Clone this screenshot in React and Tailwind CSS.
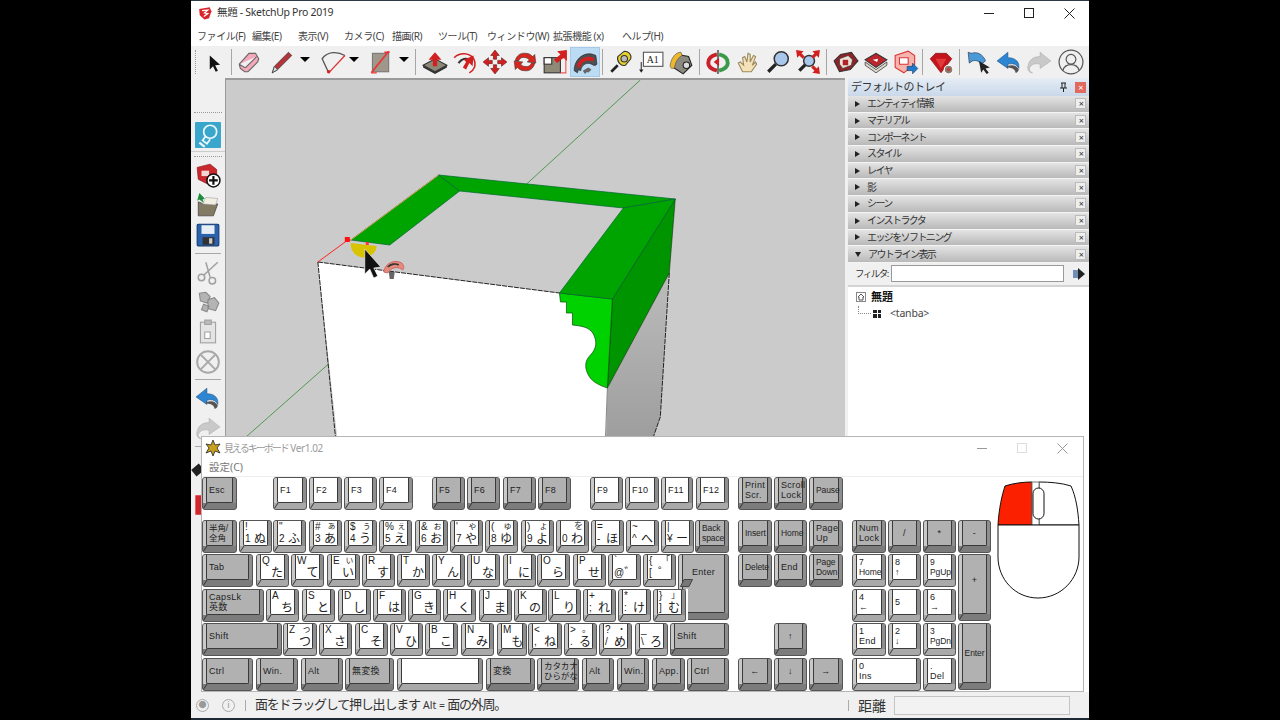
const cjk = "font-['Noto_Sans','Noto_Sans_CJK_JP',sans-serif]";

// --- icons (24 box) ---
const I = ({ children, size = 24, box = "0 0 24 24" }) => (
  <svg width={size} height={size} viewBox={box} className="block">
    {children}
  </svg>
);

const icons = {
  select: <path d="M9 6v13l3-3 2.500 5 2-1-2.500-5 4.500-.4z" fill="#111" />,
  eraser: <path d="M3 14 12 4h6l3 5-1 3-9 9H8l-4-3z M3 14l5 3h1l10-10" fill="#f4a8ba" stroke="#666" strokeWidth="1" />,
  pencil: (
    <g>
      <path d="M3 22l2-6L18 3l3 3L8 19z" fill="#b8323a" stroke="#444" strokeWidth="0.8" />
      <path d="M3 22l2-6 3 3z" fill="#ddd" stroke="#444" strokeWidth="0.8" />
    </g>
  ),
  arc: (
    <g fill="none">
      <path d="M8 22 2 9C7 2 16 2 23 6" stroke="#555" strokeWidth="1.2" />
      <path d="M8 22 23 6" stroke="#d33" strokeWidth="1.2" />
      <circle cx="8" cy="21" r="1.6" fill="#d22" />
    </g>
  ),
  rect: (
    <g>
      <rect x="5" y="4" width="15" height="17" fill="#9f988a" stroke="#777" />
      <path d="M4 22 20 2" stroke="#e33" strokeWidth="1.6" />
      <path d="M4 22h5M16 3h5" stroke="#e33" strokeWidth="1.2" />
    </g>
  ),
  pushpull: (
    <g>
      <path d="M1 15 12 9l11 6-11 6z" fill="#8c8878" stroke="#333" />
      <path d="M1 15v2l11 6 11-6v-2l-11 6z" fill="#333" />
      <path d="M12 3l6 7h-4v6h-4v-6H6z" fill="#d21f1f" />
    </g>
  ),
  follow: (
    <g fill="none">
      <path d="M2 8c5-5 14-5 18 1 3 6 0 11-4 13" stroke="#d21f1f" strokeWidth="1.4" />
      <path d="M6 13c3-4 7-5 10-3" stroke="#333" strokeWidth="2" />
      <path d="M11 10l9-4-1 10-3-3-3 6-3-2 3-5z" fill="#d21f1f" />
    </g>
  ),
  move: (
    <g fill="#d21f1f" stroke="#511" strokeWidth="0.5">
      <path d="M12 1l4 5h-2.500v3.500h-3V6H8z" />
      <path d="M12 23l4-5h-2.500v-3.500h-3V18H8z" />
      <path d="M1 12l5-4v2.500h3.500v3H6V16z" />
      <path d="M23 12l-5-4v2.500h-3.500v3H18V16z" />
    </g>
  ),
  rotate: (
    <g fill="#d7261e" stroke="#333" strokeWidth="0.5">
      <path d="M3 11c1-5 5-8 10-7 3 0 5 2 6 3l2-2 1 8-8-1 2-2c-2-2-3-2-4-2-3-1-5 1-6 3z" />
      <path d="M21 13c-1 5-5 8-10 7-3 0-5-2-6-3l-2 2-1-8 8 1-2 2c2 2 3 2 4 2 3 1 5-1 6-3z" />
    </g>
  ),
  scale: (
    <g>
      <rect x="2" y="8" width="15" height="14" fill="#8f8a78" stroke="#333" />
      <rect x="2" y="8" width="7" height="6" fill="#fff" stroke="#333" />
      <path d="M17 8h5v14h-5" fill="none" stroke="#e55" />
      <path d="M23 1l-9 1 3 3-6 5 3 3 6-5 3 3z" fill="#d21f1f" />
    </g>
  ),
  offset: (
    <g>
      <path d="M2 20C2 9 12 1 22 6l1 8c-2 2-3 1-5 0-4-2-9 0-10 6l-2-1-1 3z" fill="#4d5055" stroke="#222" strokeWidth="0.6" />
      <path d="M6 17c1-6 7-10 14-7" fill="none" stroke="#d21f1f" strokeWidth="3.4" />
      <path d="M10 20l5-3 3 2-3 3-1-1-2 2z" fill="#666" />
    </g>
  ),
  tape: (
    <g>
      <path d="M9 7l6-5c4 0 7 3 6 7l-5 6c-4 1-8-3-7-8z" fill="#e6d22c" stroke="#333" strokeWidth="1" />
      <circle cx="15" cy="9" r="3" fill="#bbb" stroke="#333" />
      <path d="M9 15 3 21" stroke="#222" strokeWidth="2.5" />
    </g>
  ),
  text: (
    <g>
      <rect x="5" y="3" width="18" height="13" fill="#fff" stroke="#555" />
      <text x="8" y="13" fontSize="9" fontFamily="Liberation Serif" fill="#222">
        A1
      </text>
      <path d="M3 12v8" stroke="#333" strokeWidth="1" />
      <path d="M1 19h4l-2 3z" fill="#222" />
    </g>
  ),
  paint: (
    <g>
      <path d="M9 5l10 2 3 8-8 8-9-6z" fill="#8a8a80" stroke="#222" />
      <circle cx="17" cy="15" r="3" fill="#ddd" stroke="#222" />
      <path d="M12 3c-5 0-9 5-10 12 0 3 2 4 4 2 1-5 3-9 7-11z" fill="#efb82c" stroke="#555" strokeWidth="0.6" />
    </g>
  ),
  orbit: (
    <g fill="none">
      <path d="M11 5C6 6 3 9 3 13s4 6 8 7" stroke="#c9202a" strokeWidth="3.6" />
      <path d="M13 5c5 1 8 4 8 8s-4 6-8 7" stroke="#3a9a4a" strokeWidth="3.6" />
      <path d="M12 1v22" stroke="#333" strokeWidth="1.2" />
      <path d="M8 12l5-4v8z" fill="#c9202a" />
    </g>
  ),
  pan: <path d="M7 21 3 13l2-1 3 3-1-7 2-1 2 5 1-8 2 1 0 7 3-6 2 1-3 8 3-3 1 2-5 7z" fill="#f6e2b8" stroke="#9a8a60" strokeWidth="1" />,
  zoom: (
    <g>
      <path d="M10 14 3 21" stroke="#222" strokeWidth="3" />
      <circle cx="15" cy="9" r="6.5" fill="#a9c7ea" stroke="#333" strokeWidth="1.4" />
    </g>
  ),
  zoomext: (
    <g>
      <path d="M10 14 4 20" stroke="#222" strokeWidth="3" />
      <circle cx="13" cy="11" r="5" fill="#a9c7ea" stroke="#333" strokeWidth="1.4" />
      <path d="M1 1l7 1-2 2 3 3-2 2-3-3-2 2zM23 1l-1 7-2-2-3 3-2-2 3-3-2-2zM23 23l-7-1 2-2-3-3 2-2 3 3 2-2z" fill="#d21f1f" />
    </g>
  ),
  warehouse: (
    <g>
      <path d="M1 11l6-6 10-2 6 8-7 8-10 2z" fill="#8f2226" stroke="#333" />
      <path d="M6 9l8-3 4 4-1 5-8 3-3-4z" fill="#e9e2d4" stroke="#333" strokeWidth="0.6" />
      <path d="M9 10h5v5H9z" fill="#b02228" />
    </g>
  ),
  ext: (
    <g>
      <path d="M2 10l10-6 10 6-10 7z" fill="#b9262c" stroke="#333" />
      <path d="M2 12l10 7 10-7v3l-10 7-10-7z" fill="#ddd8ce" stroke="#333" strokeWidth="0.7" />
      <path d="M9 10l5-1-1 3z" fill="#fff" />
    </g>
  ),
  layout: (
    <g>
      <path d="M2 6l12-4 6 4v8l-10 8-8-5z" fill="#f5b5ae" stroke="#d33" />
      <path d="M6 8h8v6H6z" fill="#fff" stroke="#d33" />
      <path d="M13 16h5v-3l5 5-5 5v-3h-5z" fill="#1f78c8" stroke="#124" strokeWidth="0.4" />
    </g>
  ),
  ruby: (
    <g>
      <path d="M2 9l5-5h10l5 5-10 13z" fill="#c4141c" stroke="#711" strokeWidth="0.6" />
      <path d="M7 9h10l-5 9z" fill="#e23a3a" />
      <circle cx="19" cy="19" r="4" fill="#8a7a70" stroke="#fff" />
      <circle cx="19" cy="19" r="1.4" fill="#c33" />
    </g>
  ),
  share: (
    <g>
      <path d="M2 3l1 10 3-2c3-1 6 0 8 3l4-3C16 5 10 2 5 4z" fill="#4a9ad8" stroke="#235" strokeWidth="0.6" />
      <path d="M12 11l10 6-4 1 3 4-2 1-3-4-2 3z" fill="#222" />
    </g>
  ),
  undo: (
    <g>
      <path d="M11 3 1 11l10 7v-4c5-1 8 0 10 4 1-6-3-10-10-10z" fill="#2d86d2" stroke="#164a80" strokeWidth="0.5" />
      <path d="M10 16c5-2 9-1 11 3 0 1-1 3-3 3 0-3-3-5-8-5z" fill="#555" />
    </g>
  ),
  redo: <path d="M13 3l10 8-10 7v-4c-5-1-8 0-10 4 0 2 1 3 3 4-4 0-5-4-4-7 1-5 5-8 11-8z" fill="#c9c9c9" stroke="#aaa" strokeWidth="0.5" />,
  user: (
    <g fill="none" stroke="#555" strokeWidth="1.1">
      <circle cx="12" cy="12" r="11" />
      <circle cx="12" cy="9.5" r="4.5" />
      <path d="M4.500 20c1-4 4-5.500 7.500-5.500s6.500 1.500 7.500 5.500" />
    </g>
  ),
  lamp: (
    <g>
      <rect width="24" height="24" rx="1" fill="#3aa6cc" />
      <circle cx="14" cy="9" r="6" fill="none" stroke="#eef8fb" strokeWidth="1.6" />
      <path d="M10 13 7 17l4 3 3-4" fill="none" stroke="#eef8fb" strokeWidth="1.6" />
      <path d="M4 19l5 4" stroke="#eef8fb" strokeWidth="2" />
    </g>
  ),
  add: (
    <g>
      <path d="M2 5l12-3 6 5v6l-7 8-10-5z" fill="#c8282e" stroke="#811" strokeWidth="0.6" />
      <path d="M6 8h7v5H6z" fill="#f5d6d2" />
      <circle cx="17" cy="17" r="6" fill="#fff" stroke="#111" strokeWidth="1.4" />
      <path d="M17 13v8M13 17h8" stroke="#111" strokeWidth="2" />
    </g>
  ),
  open: (
    <g>
      <path d="M3 9v13h14l4-11H8z" fill="#827a62" stroke="#333" strokeWidth="0.6" />
      <path d="M7 11l3-6 11 1-2 6z" fill="#f2eee2" stroke="#999" strokeWidth="0.5" />
      <path d="M4 1l5 5-2 1 1 3-4-3-2 1z" fill="#1e8c3c" />
    </g>
  ),
  save: (
    <g>
      <rect x="2" y="2" width="20" height="20" rx="1" fill="#2b62ae" stroke="#123a70" />
      <rect x="6" y="3" width="12" height="8" fill="#e8eef6" />
      <rect x="7" y="14" width="11" height="7" fill="#333" />
      <rect x="13" y="15" width="3" height="5" fill="#ccc" />
    </g>
  ),
  cut: (
    <g fill="none" stroke="#a0a0a0" strokeWidth="1.4">
      <circle cx="6" cy="17" r="3" />
      <circle cx="16" cy="20" r="3" />
      <path d="M8 15 21 3M14 17 10 3" />
    </g>
  ),
  copy: <path d="M4 4l6-1 4 4-3 6-6-2zM12 10l6-2 4 5-3 7-7-2zM8 14l5 2-2 5-5-2z" fill="#b4b4b4" stroke="#8a8a8a" />,
  paste: (
    <g fill="#e4e4e4" stroke="#a0a0a0">
      <rect x="5" y="3" width="14" height="19" />
      <rect x="9" y="1" width="6" height="4" fill="#bbb" />
      <path d="M9 12h5v6H9z" fill="#fff" />
    </g>
  ),
  clear: (
    <g fill="none" stroke="#a8a8a8" strokeWidth="1.8">
      <circle cx="12" cy="12" r="10" />
      <path d="M5 5l14 14M19 5 5 19" />
    </g>
  ),
  // mostly hidden behind the keyboard window
  darkTool: <path d="M2 12l7-6 5 6-7 6z" fill="#222" />,
  redTool: <path d="M4 3h8v18H4z" fill="#d2262c" />,
};

const Tool = ({ name, active }) => (
  <div className={`flex h-[30px] w-[30px] shrink-0 items-center justify-center ${active ? "bg-[#bcdcf4] shadow-[inset_0_0_0_1px_#a6cbe8]" : ""}`}>
    <I size={26}>{icons[name]}</I>
  </div>
);
const Drop = ({ cls }) => <div className={`h-0 w-0 shrink-0 self-start mt-[11px] border-x-[5px] border-t-[5px] border-x-transparent border-t-black ${cls}`} />;
const VSep = ({ cls }) => <div className={`h-[26px] w-px shrink-0 bg-[#a6a6a6] ${cls}`} />;
const HSep = ({ cls }) => <div className={`mx-[3px] h-px w-[26px] bg-[#a8a8a8] ${cls}`} />;

const menus = [
  ["ファイル(F)", "w-[55px]"],
  ["編集(E)", "w-[46px]"],
  ["表示(V)", "w-[46px]"],
  ["カメラ(C)", "w-[48px]"],
  ["描画(R)", "w-[46px]"],
  ["ツール(T)", "w-[49px]"],
  ["ウィンドウ(W)", "w-[66px]"],
  ["拡張機能 (x)", "w-[69px]"],
  ["ヘルプ(H)", "w-[60px]"],
];

const trayRows = ["エンティティ情報", "マテリアル", "コンポーネント", "スタイル", "レイヤ", "影", "シーン", "インストラクタ", "エッジをソフトニング"];

// --- keyboard data: a/b are page x from/to ---
const g = (a, b, t, o = {}) => ({ a, b, t, ...o });
const n = (a, b, t, o = {}) => ({ a, b, t, white: true, ...o });
const w = (a, tl, bl, tr, br, b) => ({ a, b: b || a + 33, tl, bl, tr, br, white: true });

const rows = [
  [
    g(202, 237, "Esc"),
    n(273, 307, "F1"), n(309, 342, "F2"), n(344, 377, "F3"), n(379, 413, "F4"),
    g(432, 465, "F5"), g(467, 500, "F6"), g(503, 536, "F7"), g(538, 571, "F8"),
    n(590, 623, "F9"), n(625, 659, "F10"), n(661, 693, "F11"), n(696, 729, "F12"),
    g(738, 772, "Print\nScr."), g(774, 807, "Scroll\nLock"), g(809, 843, "Pause", { small: true }),
  ],
  [
    g(202, 237, "半角/\n全角", { small: true }),
    w(239, "!", "1", "", "ぬ"), w(273, "\"", "2", "", "ふ"), w(309, "#", "3", "ぁ", "あ"), w(344, "$", "4", "ぅ", "う"),
    w(379, "%", "5", "ぇ", "え"), w(415, "&", "6", "ぉ", "お"), w(450, "'", "7", "ゃ", "や"), w(485, "(", "8", "ゅ", "ゆ"),
    w(521, ")", "9", "ょ", "よ"), w(556, "", "0", "を", "わ"), w(591, "=", "-", "", "ほ"), w(626, "~", "^", "", "へ"), w(661, "|", "¥", "", "ー"),
    g(695, 729, "Back\nspace", { small: true }),
    g(738, 772, "Insert", { small: true }), g(774, 807, "Home", { small: true }), g(809, 843, "Page\nUp"),
    g(852, 886, "Num\nLock"), g(888, 921, "/", { center: true }), g(923, 956, "*", { center: true }), g(958, 991, "-", { center: true }),
  ],
  [
    g(202, 253, "Tab"),
    w(256, "Q", "", "", "た"), w(291, "W", "", "", "て"), w(327, "E", "", "ぃ", "い"), w(362, "R", "", "", "す"), w(397, "T", "", "", "か"),
    w(432, "Y", "", "", "ん"), w(467, "U", "", "", "な"), w(503, "I", "", "", "に"), w(537, "O", "", "", "ら"), w(573, "P", "", "", "せ"),
    w(608, "`", "@", "", "゛"), w(643, "{", "[", "「", "゜"),
    g(678, 729, "Enter", { h: 66, center: true, notch: true, pt: "pt-[12px]" }),
    g(738, 772, "Delete", { small: true }), g(774, 807, "End"), g(809, 843, "Page\nDown", { small: true }),
    n(852, 886, "7\nHome", { small: true }), n(888, 921, "8\n↑"), n(923, 956, "9\nPgUp", { small: true }),
    g(958, 991, "+", { h: 67, center: true, pt: "pt-[20px]" }),
  ],
  [
    g(202, 264, "CapsLk\n英数"),
    w(266, "A", "", "", "ち"), w(302, "S", "", "", "と"), w(338, "D", "", "", "し"), w(373, "F", "", "", "は"), w(408, "G", "", "", "き"),
    w(443, "H", "", "", "く"), w(479, "J", "", "", "ま"), w(514, "K", "", "", "の"), w(548, "L", "", "", "り"),
    w(583, "+", ";", "", "れ"), w(618, "*", ":", "", "け"), w(653, "}", "]", "」", "む"),
    { a: 686, b: 688, gap: true },
    n(852, 886, "4\n←"), n(888, 921, "5"), n(923, 956, "6\n→"),
  ],
  [
    g(202, 282, "Shift"),
    w(283, "Z", "", "っ", "つ", 317), w(319, "X", "", "", "さ"), w(355, "C", "", "", "そ"), w(390, "V", "", "", "ひ"), w(425, "B", "", "", "こ"),
    w(461, "N", "", "", "み"), w(497, "M", "", "", "も", 527), w(528, "<", ",", "", "ね", 562), w(564, ">", ".", "。", "る"), w(599, "?", "/", "・", "め"), w(635, "_", "\\", "", "ろ"),
    g(670, 729, "Shift"),
    g(774, 807, "↑", { center: true }),
    n(852, 886, "1\nEnd"), n(888, 921, "2\n↓"), n(923, 956, "3\nPgDn", { small: true }),
    g(958, 991, "Enter", { h: 67, center: true, small: true }),
  ],
  [
    g(202, 253, "Ctrl"), g(256, 298, "Win."), g(301, 343, "Alt"), g(345, 394, "無変換"), n(397, 483, ""), g(486, 535, "変換"),
    g(537, 579, "カタカナ\nひらがな", { small: true }), g(582, 614, "Alt"), g(617, 649, "Win."), g(652, 685, "App."), g(687, 729, "Ctrl"),
    g(738, 772, "←", { center: true }), g(774, 807, "↓", { center: true }), g(809, 843, "→", { center: true }),
    n(852, 921, "0\nIns"), n(923, 956, ".\nDel"),
  ],
];

const Key = ({ k, ml }) => {
  if (k.gap) return <div className="relative h-[33px] shrink-0 bg-white" style={{ marginLeft: ml, width: k.b - k.a }} />;
  const h = k.h || 33;
  return (
    <div
      className={`relative shrink-0 overflow-hidden rounded-[3px] border border-[#555] pb-[6px] font-['Liberation_Sans','Noto_Sans_CJK_JP',sans-serif] ${k.white ? "bg-[#a9a9a9]" : "bg-[#7c7c7c]"}`}
      style={{ marginLeft: ml, width: k.b - k.a, height: h }}
    >
      <div className="h-full border-l-[3px] border-r-[3px] border-l-[#c9c9c9] border-r-[#8e8e8e]">
        <div
          className={`h-full rounded-b-[2px] border-x border-b border-[#3a3a3a] text-[#222] ${k.white ? "bg-white" : "bg-[#b1b1b1]"} ${
            k.tl !== undefined ? "grid grid-cols-[1fr_auto] grid-rows-2 px-px" : `flex whitespace-pre px-[2px] ${k.pt ? `items-start ${k.pt}` : "items-center"}`
          } ${k.center ? "justify-center" : ""}`}
        >
          {k.tl !== undefined ? (
            <>
              <span className="text-[10px] leading-[12px]">{k.tl}</span>
              <span className="text-right text-[9px] leading-[11px] text-[#333]">{k.tr}</span>
              <span className="text-[10px] leading-[12px]">{k.bl}</span>
              <span className="text-right text-[12px] leading-[12px]">{k.br}</span>
            </>
          ) : (
            <span className={k.small ? "text-[8.5px] leading-[10px] tracking-[-0.1px]" : "text-[9px] leading-[10px] tracking-[0.3px]"}>{k.t}</span>
          )}
        </div>
      </div>
      <svg width="6" height="6" className="absolute bottom-0 left-0">
        <path d="M0 6 4 0" stroke="#333" strokeWidth="1" />
      </svg>
      {k.notch && (
        <svg width="13" height="8" className="absolute left-[1px] top-[24px]">
          <path d="M.5 7.500 4 .5h8.500L9 7.500z" fill="#777" stroke="#444" />
        </svg>
      )}
    </div>
  );
};

const KeyRow = ({ keys, cls }) => (
  <div className={`flex h-[33px] ${cls}`}>
    {keys.map((k, i) => (
      <Key key={i} k={k} ml={k.a - (i ? keys[i - 1].b : 202)} />
    ))}
  </div>
);

const MouseDrawing = () => (
  <svg width="83" height="118" viewBox="997 481 83 118" className="ml-[6px] mt-[4px] shrink-0">
    <path d="M998 525C999 508 1002 495 1005 486 1014 483 1024 482 1032 482V525z" fill="#fb2000" stroke="#111" />
    <path d="M1039 482C1050 482 1062 483 1071 486 1076 497 1078 510 1079 525H1039z" fill="#fff" stroke="#111" />
    <path d="M1032 482h7v43h-7z" fill="#fff" stroke="#777" />
    <path d="M998 525h81v32c0 22-18 41-41 41s-40-19-40-41z" fill="#fff" stroke="#111" />
    <rect x="1033" y="488" width="11" height="31" rx="5.5" fill="#fff" stroke="#111" />
  </svg>
);

const Viewport = () => (
  <svg viewBox="225 80 620 612" className="block h-full w-full" preserveAspectRatio="none">
    <defs>
      <linearGradient id="side" x1="0" y1="0" x2="0" y2="1">
        <stop offset="0" stopColor="#bcbcbc" />
        <stop offset="1" stopColor="#989898" />
      </linearGradient>
    </defs>
    <path d="M640 80 525 185M245 437 330 362" stroke="#4f9a4f" strokeWidth="1" />
    {/* front + side faces */}
    <path d="M317 262 559 293 612 299 607 388 605 470H340z" fill="#fff" />
    <path d="M669 273 607 388 605 470H652L653 437 660 417z" fill="url(#side)" />
    <path d="M317 262 338 470" stroke="#222" strokeWidth="1" strokeDasharray="5 1" fill="none" />
    <path d="M317 262 559 293" stroke="#222" strokeWidth="1" strokeDasharray="5 1" fill="none" />
    <path d="M669 273 660 417 653 437" stroke="#222" strokeWidth="1" strokeDasharray="5 1" fill="none" />
    <path d="M607 388 605 440" stroke="#888" strokeWidth="1" />
    {/* moulding */}
    <path d="M675 199 612 299 607 388 669 273z" fill="#009400" stroke="#111" strokeWidth="0.5" />
    <path d="M559 293 612 299 607 388C598 385 590 381 587 373 584 366 585 360 590 355 596 349 597 342 593 334 589 327 581 326 572 325V313H566V302H560z" fill="#00d200" stroke="#0a4a0a" strokeWidth="0.7" />
    <path d="M350 240 438 175 459 191 389 245z" fill="#00a400" stroke="#063" strokeWidth="0.7" />
    <path d="M438 175 675 199 623 208 459 191z" fill="#00a400" stroke="#063" strokeWidth="0.7" />
    <path d="M675 199 623 208 559 293 612 299z" fill="#00a400" stroke="#063" strokeWidth="0.7" />
    <path d="M350 240 438 175" stroke="#d9a050" strokeWidth="1" />
    <path d="M317 262 347 240 350 240" stroke="#f22" strokeWidth="1" fill="none" />
    <rect x="344" y="237" width="5" height="5" fill="#f11" />
    <rect x="365" y="242" width="3" height="3" fill="#f33" />
    {/* cursor */}
    <path d="M350 243A13 13 0 0 0 376 246L366 245z" fill="#d8c300" />
    <path d="M364 249v25l5-5 4 9 4-2-4-8 7-1z" fill="#111" stroke="#fff" strokeWidth="0.6" />
    <path d="M383 272c1-9 11-13 18-9 2 2 3 5 1 7-4-4-12-3-15 3z" fill="#e58a7a" stroke="#c66" strokeWidth="1" />
    <path d="M387 267c3-3 8-4 11-2" fill="none" stroke="#333" strokeWidth="1.6" />
    <path d="M388 272l6 0-1 7-4 0z" fill="#666" />
  </svg>
);

export default function App() {
  return (
    <div className={`flex h-[720px] w-[1280px] justify-center overflow-hidden bg-black ${cjk}`}>
      <div className="relative flex h-[720px] w-[898px] flex-col border-b-2 border-t border-b-[#1d2a36] border-t-[#2e3a45] bg-[#f0f0f0]">
        {/* title bar */}
        <div className="flex h-[24px] shrink-0 items-center bg-white pl-[7px]">
          <I size={14}>
            <path d="M2 5 20 2l3 7-4 12-8 2-8-7z" fill="#d8232a" />
            <path d="M7 8l10-1-6 5 6 1-7 5" fill="none" stroke="#fff" strokeWidth="2" />
          </I>
          <span className="ml-[5px] text-[10.5px] tracking-[-0.3px] text-[#333]">無題 - SketchUp Pro 2019</span>
          <div className="ml-auto flex items-center text-[#222]">
            <div className="flex w-[40px] justify-center"><div className="h-px w-[10px] bg-[#222]" /></div>
            <div className="flex w-[40px] justify-center"><div className="h-[10px] w-[10px] border border-[#222]" /></div>
            <div className="flex w-[40px] justify-center">
              <svg width="11" height="11"><path d="M.5.5l10 10M10.500.5l-10 10" stroke="#222" /></svg>
            </div>
          </div>
        </div>
        {/* menu */}
        <div className="flex h-[21px] shrink-0 items-center bg-white pl-[6px] pt-[1px] text-[10px] tracking-[-0.4px] text-[#444]">
          {menus.map(([t, c]) => (
            <span key={t} className={`${c} shrink-0 whitespace-nowrap`}>{t}</span>
          ))}
        </div>
        {/* top toolbar */}
        <div className="flex h-[32px] shrink-0 items-center bg-[#f0f0f0]">
          <div className="ml-[4px] mr-[2px] h-[24px] w-px border-l border-dotted border-[#999]" />
          <Tool name="select" />
          <VSep cls="ml-[3px] mr-[2px]" />
          <Tool name="eraser" />
          <div className="w-[3px] shrink-0" />
          <Tool name="pencil" />
          <Drop cls="ml-[3px] mr-[2px]" />
          <div className="w-[6px] shrink-0" />
          <Tool name="arc" />
          <Drop cls="ml-[1px]" />
          <div className="w-[6px] shrink-0" />
          <Tool name="rect" />
          <Drop cls="ml-[4px]" />
          <VSep cls="ml-[6px] mr-[4px]" />
          <Tool name="pushpull" />
          <Tool name="follow" />
          <Tool name="move" />
          <Tool name="rotate" />
          <Tool name="scale" />
          <Tool name="offset" active />
          <VSep cls="ml-[2px] mr-[3px]" />
          <Tool name="tape" />
          <Tool name="text" />
          <Tool name="paint" />
          <VSep cls="ml-[3px] mr-[3px]" />
          <Tool name="orbit" />
          <Tool name="pan" />
          <Tool name="zoom" />
          <Tool name="zoomext" />
          <VSep cls="ml-[3px] mr-[4px]" />
          <Tool name="warehouse" />
          <Tool name="ext" />
          <Tool name="layout" />
          <VSep cls="ml-[1px] mr-[3px]" />
          <Tool name="ruby" />
          <VSep cls="ml-[3px] mr-[4px]" />
          <Tool name="share" />
          <Tool name="undo" />
          <Tool name="redo" />
          <div className="w-[2px] shrink-0" />
          <Tool name="user" />
        </div>
        {/* main area */}
        <div className="flex min-h-0 flex-1">
          <div className="flex w-[34px] shrink-0 flex-col items-center overflow-hidden bg-[#f0f0f0] pt-[34px]">
            <div className="h-px w-[28px] shrink-0 border-t border-dotted border-[#999]" />
            <div className="mt-[7px]"><Tool name="lamp" /></div>
            <div className="mt-[1px] h-px w-[34px] shrink-0 bg-[#ccc]" />
            <div className="mt-[4px] h-px w-[28px] shrink-0 border-t border-dotted border-[#999]" />
            <div className="mt-[3px]"><Tool name="add" /></div>
            <Tool name="open" />
            <Tool name="save" />
            <HSep cls="my-[3px] shrink-0" />
            <Tool name="cut" />
            <Tool name="copy" />
            <Tool name="paste" />
            <Tool name="clear" />
            <HSep cls="mb-[3px] mt-[2px] shrink-0" />
            <Tool name="undo" />
            <Tool name="redo" />
            <HSep cls="mt-[3px] shrink-0" />
            <div className="ml-[-12px] mt-[8px]"><Tool name="darkTool" /></div>
            <div className="ml-[-8px] mt-[5px]"><Tool name="redTool" /></div>
          </div>
          <div className="min-w-0 flex-1 border-l border-t-2 border-l-[#9a9a9a] border-t-[#9a9a9a] bg-[#cbcbcb]">
            <Viewport />
          </div>
          <div className="ml-[3px] flex w-[241px] shrink-0 flex-col bg-white">
            <div className="flex h-[18px] shrink-0 items-center bg-gradient-to-b from-[#e6edf5] to-[#c9d8ea] pl-[3px] pr-[3px] text-[11px] tracking-[-0.5px] text-[#333]">
              デフォルトのトレイ
              <svg width="9" height="11" className="ml-auto mr-[7px]">
                <path d="M2 1h5M3 1v5M6 1v5M1 6h7M4.500 6v4" stroke="#222" fill="none" />
              </svg>
              <div className="flex h-[11px] w-[11px] items-center justify-center bg-[#e06a5e] text-[9px] leading-none text-white">×</div>
            </div>
            {trayRows.map((t) => (
              <TrayRow key={t} label={t} />
            ))}
            <TrayRow label="アウトライン表示" open />
            <div className="flex h-[24px] shrink-0 items-center border-b-2 border-[#d4d4d4] bg-[#f0f0f0] pl-[7px]">
              <span className="w-[35px] shrink-0 whitespace-nowrap text-[9.5px] tracking-[-1.5px] text-[#333]">フィルタ:</span>
              <div className="ml-[1px] h-[17px] w-[173px] shrink-0 border border-[#9a9a9a] bg-white" />
              <svg width="14" height="12" viewBox="0 0 14 12" className="ml-[8px]">
                <rect x="1" y="2" width="6" height="8" fill="#6f8fb5" />
                <path d="M6 0l7 6-7 6z" fill="#222" />
              </svg>
            </div>
            <div className="pl-[8px] pt-[2px]">
              <div className="flex h-[17px] items-center">
                <svg width="10" height="10" viewBox="0 0 10 10">
                  <rect x=".5" y=".5" width="9" height="9" fill="none" stroke="#888" />
                  <path d="M5 2 2 5h1v3h4V5h1z" fill="none" stroke="#555" />
                </svg>
                <span className="ml-[5px] text-[11px] font-bold text-[#111]">無題</span>
              </div>
              <div className="flex h-[16px] items-center">
                <div className="ml-[2px] mb-[8px] h-[8px] w-[13px] border-b border-l border-dotted border-[#888]" />
                <div className="ml-[2px] grid h-[8px] w-[8px] grid-cols-2 gap-px">
                  <i className="bg-[#222]" /><i className="bg-[#222]" /><i className="bg-[#222]" /><i className="bg-[#222]" />
                </div>
                <span className="ml-[9px] text-[10.5px] tracking-[-0.2px] text-[#444]">&lt;tanba&gt;</span>
              </div>
            </div>
          </div>
        </div>
        {/* status bar */}
        <div className="flex h-[26px] shrink-0 items-center bg-[#f0f0f0] pl-[5px] text-[#333]">
          <div className="flex h-[13px] w-[13px] items-center justify-center rounded-full border border-[#aaa] text-[8px] text-[#999]">●</div>
          <div className="ml-[13px] flex h-[13px] w-[13px] items-center justify-center rounded-full border border-[#aaa] text-[9px] text-[#999]">i</div>
          <div className="ml-[10px] h-[11px] w-px bg-[#aaa]" />
          <span className="ml-[9px] text-[13px] tracking-[-1.2px]">
            面をドラッグして押し出します <span className="ml-[1px] text-[10.5px] tracking-[0px]">Alt =</span> 面の外周。
          </span>
          <div className="ml-auto h-[11px] w-px bg-[#aaa]" />
          <span className="ml-[9px] text-[14px]">距離</span>
          <div className="ml-[8px] h-[19px] w-[176px] border border-[#c4c4c4] bg-[#f2f2f2]" />
          <div className="w-[19px]" />
        </div>
        {/* floating on-screen keyboard window */}
        <div className="absolute left-[11px] top-[436px] h-[254px] w-[881px] bg-white shadow-[0_0_0_1px_#b5b5b5]">
          <div className="flex h-[22px] items-center pl-[3px]">
            <svg width="16" height="16" viewBox="0 0 16 16">
              <path d="M8 0l2 5 5-1-3 4 3 5-5-2-2 5-2-5-5 2 3-5-3-4 5 1z" fill="#c8a020" stroke="#222" strokeWidth="0.8" />
            </svg>
            <span className="ml-[3px] text-[10px] tracking-[-2px] text-[#9a9a9a]">
              見えるキーボード <span className="ml-[2px] text-[10px] tracking-[-0.4px]">Ver1.02</span>
            </span>
            <div className="ml-auto flex items-center pr-[1px]">
              <div className="flex w-[40px] justify-center"><div className="h-px w-[10px] bg-[#999]" /></div>
              <div className="flex w-[40px] justify-center"><div className="h-[10px] w-[10px] border border-[#ddd]" /></div>
              <div className="flex w-[40px] justify-center">
                <svg width="11" height="11"><path d="M.5.5l10 10M10.500.5l-10 10" stroke="#999" /></svg>
              </div>
            </div>
          </div>
          <div className="flex h-[18px] items-center border-b border-[#eee] pl-[7px] text-[10.5px] text-[#777]">設定(C)</div>
          <div className="flex">
            <div className="w-[789px] shrink-0">
              <KeyRow keys={rows[0]} cls="mb-[10px]" />
              <KeyRow keys={rows[1]} cls="mb-[1.4px]" />
              <KeyRow keys={rows[2]} cls="mb-[1.4px]" />
              <KeyRow keys={rows[3]} cls="mb-[1.4px]" />
              <KeyRow keys={rows[4]} cls="mb-[1.4px]" />
              <KeyRow keys={rows[5]} />
            </div>
            <MouseDrawing />
          </div>
        </div>
      </div>
    </div>
  );
}

function TrayRow({ label, open }) {
  return (
    <div className="flex h-[16.7px] shrink-0 items-center border-b border-[#f4f4f4] bg-gradient-to-b from-[#e4e4e4] to-[#b9b9b9] pl-[7px] pr-[3px] text-[10px] tracking-[-1.6px] text-[#333]">
      <div className={open ? "h-0 w-0 border-x-[3px] border-t-[5px] border-x-transparent border-t-[#222]" : "h-0 w-0 border-y-[3px] border-l-[5px] border-y-transparent border-l-[#222]"} />
      <span className="ml-[7px]">{label}</span>
      <div className="ml-auto flex h-[11px] w-[11px] items-center justify-center border border-[#bbb] bg-[#eee] text-[9px] leading-none">×</div>
    </div>
  );
}
